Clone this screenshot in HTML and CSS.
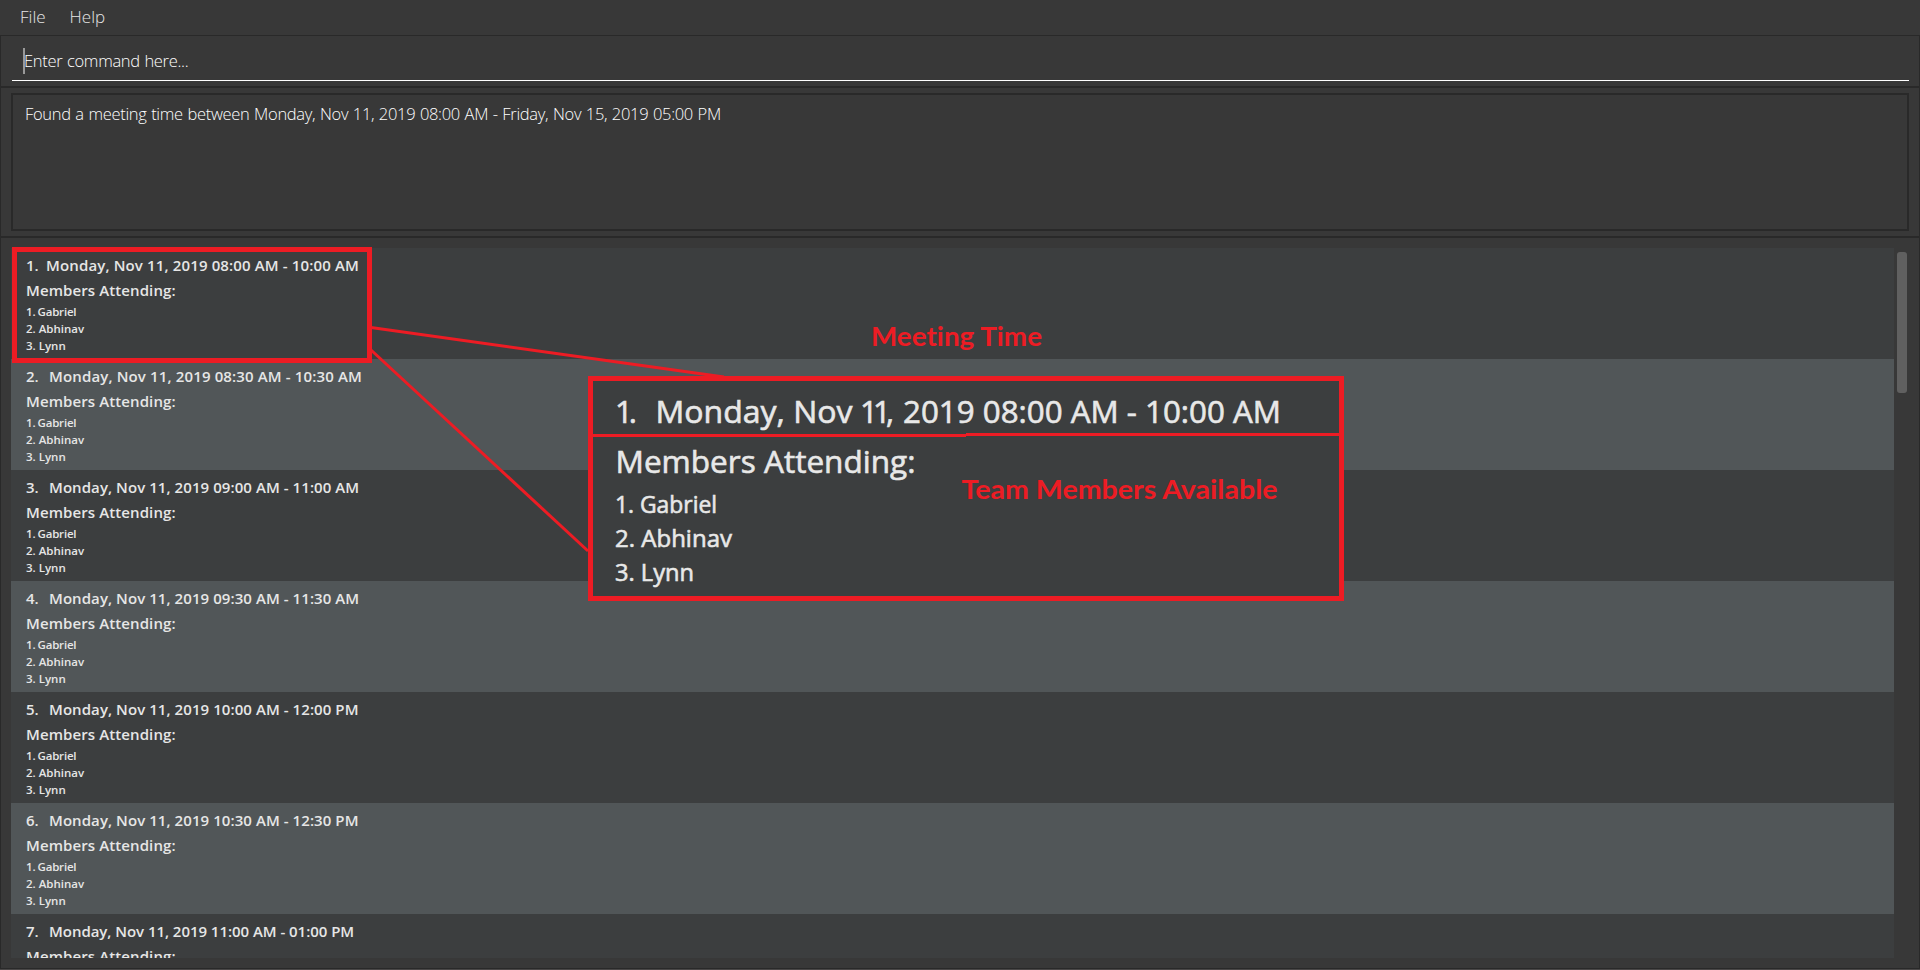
FILE: index.html
```
<!DOCTYPE html>
<html lang="en">
<head>
<meta charset="utf-8">
<title>Meeting Times</title>
<link rel="stylesheet" href="styles.css">
</head>
<body>
<div class="window">
  <nav class="menu"><span>File</span><span>Help</span></nav>
  <section class="command"><div class="command-field"><span class="caret"></span><span class="prompt">Enter command here...</span></div></section>
  <section class="result"><div class="result-box"><span class="result-text">Found a meeting time between Monday, Nov 11, 2019 08:00 AM - Friday, Nov 15, 2019 05:00 PM</span></div></section>
  <main class="main">
    <div class="list">
      <article class="row first"><h2><span class="num">1.</span><span class="time">Monday, Nov 11, 2019 08:00 AM - 10:00 AM</span></h2><h3>Members Attending:</h3><p class="lead">1. Gabriel</p><p>2. Abhinav</p><p>3. Lynn</p></article>
      <article class="row"><h2><span class="num">2.</span><span class="time">Monday, Nov 11, 2019 08:30 AM - 10:30 AM</span></h2><h3>Members Attending:</h3><p class="lead">1. Gabriel</p><p>2. Abhinav</p><p>3. Lynn</p></article>
      <article class="row"><h2><span class="num">3.</span><span class="time tight">Monday, Nov 11, 2019 09:00 AM - 11:00 AM</span></h2><h3>Members Attending:</h3><p class="lead">1. Gabriel</p><p>2. Abhinav</p><p>3. Lynn</p></article>
      <article class="row"><h2><span class="num">4.</span><span class="time tight">Monday, Nov 11, 2019 09:30 AM - 11:30 AM</span></h2><h3>Members Attending:</h3><p class="lead">1. Gabriel</p><p>2. Abhinav</p><p>3. Lynn</p></article>
      <article class="row"><h2><span class="num">5.</span><span class="time tight">Monday, Nov 11, 2019 10:00 AM - 12:00 PM</span></h2><h3>Members Attending:</h3><p class="lead">1. Gabriel</p><p>2. Abhinav</p><p>3. Lynn</p></article>
      <article class="row"><h2><span class="num">6.</span><span class="time tight">Monday, Nov 11, 2019 10:30 AM - 12:30 PM</span></h2><h3>Members Attending:</h3><p class="lead">1. Gabriel</p><p>2. Abhinav</p><p>3. Lynn</p></article>
      <article class="row last"><h2><span class="num">7.</span><span class="time">Monday, Nov 11, 2019 11:00 AM - 01:00 PM</span></h2><h3>Members Attending:</h3></article>
    </div>
    <div class="scrollbar"><div class="thumb"></div></div>
  </main>
</div>
<svg class="notes" width="1920" height="970" viewBox="0 0 1920 970">
  <g class="connector">
    <path d="M371 327.5L724 377"/>
    <path d="M371 350L588 551"/>
  </g>
  <rect class="frame" x="14.5" y="249.500" width="355" height="111"/>
  <rect class="frame panel" x="590.5" y="378.500" width="751" height="220"/>
  <path class="divider" d="M593 435.500H966M966 434.500H1339"/>
  <g class="large">
    <text x="615" y="423" textLength="22">1.</text>
    <text x="655.500" y="423" textLength="197" lengthAdjust="spacingAndGlyphs">Monday, Nov</text>
    <text x="860" y="423" textLength="34">11,</text>
    <text x="903" y="423" textLength="378" lengthAdjust="spacingAndGlyphs">2019 08:00 AM - 10:00 AM</text>
    <text x="615.500" y="473" textLength="300" lengthAdjust="spacingAndGlyphs">Members Attending:</text>
  </g>
  <g class="names">
    <text x="615" y="513" textLength="102" lengthAdjust="spacingAndGlyphs">1. Gabriel</text>
    <text x="615" y="547" textLength="117" lengthAdjust="spacingAndGlyphs">2. Abhinav</text>
    <text x="615" y="581" textLength="79" lengthAdjust="spacingAndGlyphs">3. Lynn</text>
  </g>
  <g class="label">
    <text x="871" y="346" textLength="171" lengthAdjust="spacingAndGlyphs">Meeting Time</text>
    <text x="961.500" y="499" textLength="316" lengthAdjust="spacingAndGlyphs">Team Members Available</text>
  </g>
</svg>
</body>
</html>
```
FILE: styles.css
```
* { box-sizing: border-box; }
body { margin: 0; background: #383838; font-family: "Open Sans", "Noto Sans", sans-serif; color: #e6e6e6; overflow: hidden; }
.window { width: 1920px; height: 970px; display: flex; flex-direction: column; border-bottom: 1px solid #4a4848; }
.menu { height: 35px; display: flex; gap: 24px; padding: 5px 0 0 20px; font-size: 17px; font-weight: 300; line-height: 23px; }
.command { height: 53px; padding: 12px 10px 0 11px; border: 1px solid #292929; border-bottom-width: 2px; }
.command-field { height: 33px; display: flex; border-bottom: 1px solid #fff; padding-left: 11px; font-size: 16.5px; font-weight: 300; line-height: 25px; }
.caret { width: 2px; height: 26px; background: #999; margin-right: -1px; }
.result { height: 150px; padding: 5px 10px 5px 10px; border: 1px solid #292929; border-top: 0; border-bottom-width: 2px; }
.result-box { height: 138px; border: 2px solid #292929; padding: 7px 12px; font-size: 16.5px; font-weight: 300; line-height: 23px; }
.prompt, .result-text { color: #fff; white-space: nowrap; letter-spacing: -0.3px; word-spacing: 0.6px; }
.main { flex: 1; min-height: 0; display: flex; padding: 10px 0 10px 10px; border: 1px solid #292929; border-top: 0; }
.list { width: 1883px; overflow: hidden; }
.row { height: 111px; padding: 5px 15px 0; background: #3c3e3f; font-weight: 600; white-space: nowrap; }
.row:nth-child(even) { background: #515658; }
h2, h3, p { margin: 0; font-weight: 600; }
h2 { display: flex; height: 25px; font-size: 15px; line-height: 24px; }
h3 { height: 25px; font-size: 15px; line-height: 24px; letter-spacing: 0.1px; }
p { font-size: 11.5px; height: 17px; line-height: 17px; }
.lead { letter-spacing: -0.18px; word-spacing: -0.7px; }
.num { width: 23px; }
.time { letter-spacing: 0.14px; }
.tight { letter-spacing: 0.07px; }
.first .num { width: 20px; }
.last .time { letter-spacing: -0.04px; }
.scrollbar { padding: 4px 3px; }
.thumb { width: 10px; height: 141px; border-radius: 3px; background: #606060; }
.notes { position: absolute; left: 0; top: 0; }
.connector, .divider, .frame { fill: none; stroke: #ed1c24; stroke-width: 3; }
.frame { stroke-width: 5; }
.panel { fill: #3c3e3f; }
.notes text { fill: #e8e8e8; stroke: #e8e8e8; stroke-width: 0.6px; }
.large text { font-size: 31px; }
.names text { font-size: 24px; }
.notes .label text { fill: #ed1c24; stroke: none; font-family: Lato, "Open Sans", sans-serif; font-size: 26px; font-weight: 700; font-variant-ligatures: none; }
```
